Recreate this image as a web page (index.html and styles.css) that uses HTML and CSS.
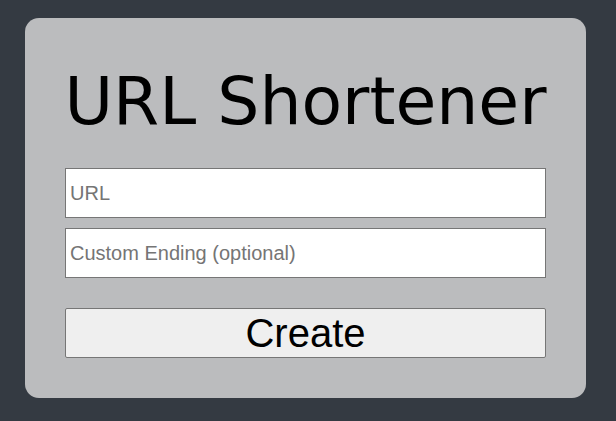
FILE: index.html
```html
<!DOCTYPE html>
<html>
<head>
<meta charset="utf-8">
<link rel="stylesheet" href="styles.css">
</head>
<body>
<div class="card">
  <h1 class="title">URL Shortener</h1>
  <div class="fields">
    <input class="field" type="text" placeholder="URL">
    <input class="field" type="text" placeholder="Custom Ending (optional)">
  </div>
  <button class="create">Create</button>
</div>
</body>
</html>
```
FILE: styles.css
```css
html, body {
  margin: 0;
  padding: 0;
  background: #343a42;
  height: 100%;
}
body {
  padding: 18px 0 0 25px;
  box-sizing: border-box;
}
.card {
  width: 561px;
  height: 380px;
  box-sizing: border-box;
  background: #bbbcbe;
  border-radius: 14px;
  padding: 0 40px;
  display: flex;
  flex-direction: column;
}
.title {
  margin: 0 -20px;
  height: 150px;
  box-sizing: border-box;
  padding-top: 48px;
  font-family: "DejaVu Sans", Verdana, sans-serif;
  font-weight: normal;
  font-size: 66.4px;
  line-height: 70px;
  white-space: nowrap;
  text-align: center;
  color: #000;
}
.fields {
  display: flex;
  flex-direction: column;
  gap: 10px;
}
.field {
  width: 481px;
  height: 50px;
  box-sizing: border-box;
  margin: 0;
  border: 1px solid #767676;
  border-radius: 0;
  padding: 1px 4px;
  background: #fff;
  font-family: "Liberation Sans", Arial, sans-serif;
  font-size: 20px;
}
.field::placeholder {
  color: #757575;
}
.create {
  margin-top: 30px;
  width: 481px;
  height: 50px;
  box-sizing: border-box;
  border: 1px solid #767676;
  border-radius: 2px;
  background: #efefef;
  font-family: "Liberation Sans", Arial, sans-serif;
  font-size: 40px;
  line-height: 48px;
  color: #000;
  padding: 0;
}
```
